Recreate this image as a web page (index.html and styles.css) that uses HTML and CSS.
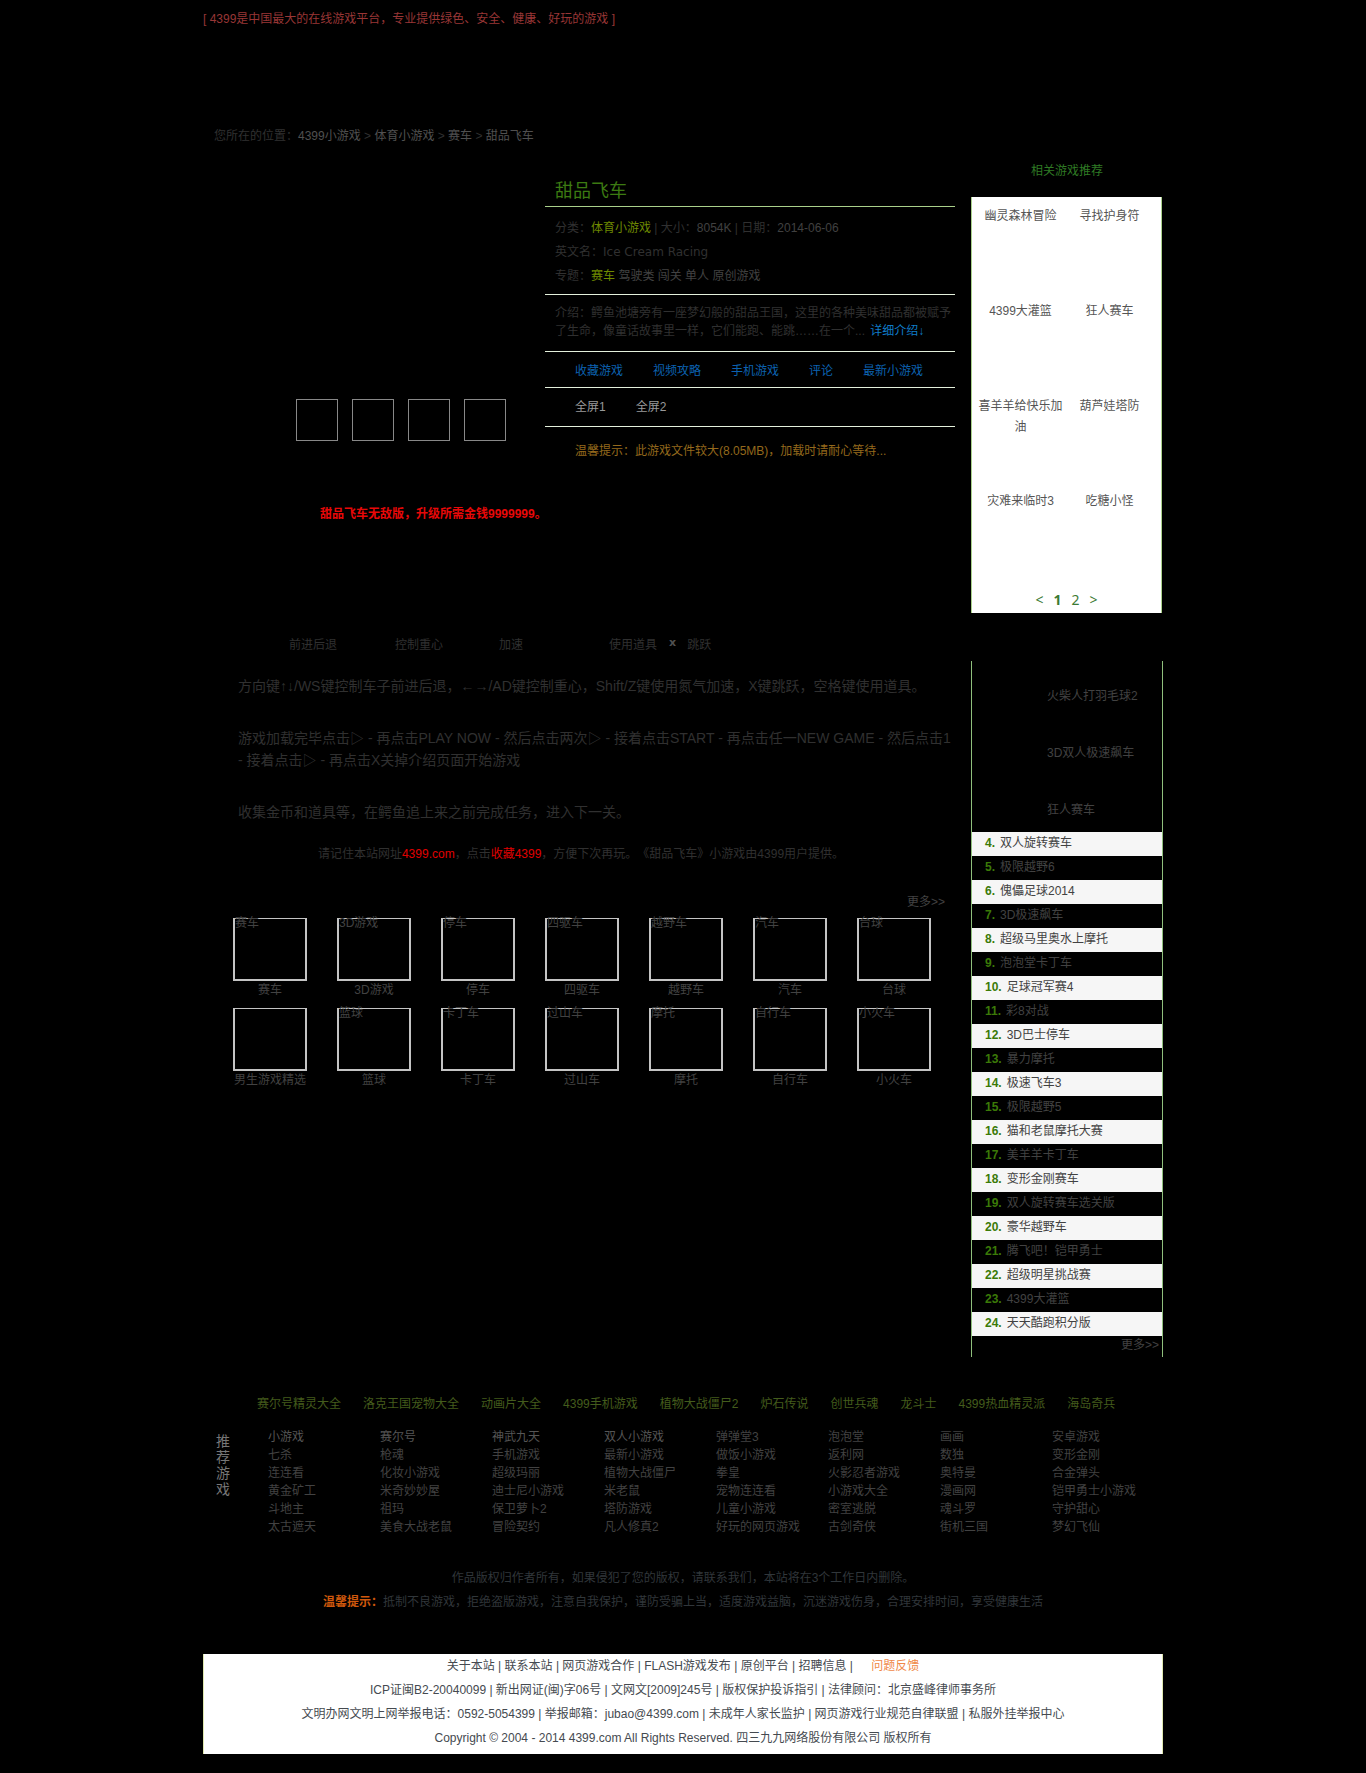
FILE: index.html
```html
<!DOCTYPE html>
<html lang="zh-CN">
<head>
<meta charset="utf-8">
<title>甜品飞车 - 4399小游戏</title>
<link rel="stylesheet" href="styles.css">
</head>
<body>
<div class="page">
  <header>
    <p class="slogan">[ 4399是中国最大的在线游戏平台，专业提供绿色、安全、健康、好玩的游戏 ]</p>
    <nav class="crumbs">您所在的位置：<a href="#">4399小游戏</a> &gt; <a href="#">体育小游戏</a> &gt; <a href="#">赛车</a> &gt; <a href="#">甜品飞车</a></nav>
  </header>

  <div class="columns">
    <main>
      <section class="game">
        <div class="preview">
          <div class="shots"><span></span><span></span><span></span><span></span></div>
          <p class="cheat">甜品飞车无敌版，升级所需金钱9999999。</p>
        </div>
        <div class="info">
          <h1>甜品飞车</h1>
          <div class="meta">
            <p>分类：<a class="hot" href="#">体育小游戏</a> | 大小：<span class="value">8054K</span> | 日期：<span class="value">2014-06-06</span></p>
            <p>英文名：<span class="english">Ice Cream Racing</span></p>
            <p>专题：<a class="hot" href="#">赛车</a> <a href="#">驾驶类</a> <a href="#">闯关</a> <a href="#">单人</a> <a href="#">原创游戏</a></p>
          </div>
          <p class="intro">介绍：鳄鱼池塘旁有一座梦幻般的甜品王国，这里的各种美味甜品都被赋予了生命，像童话故事里一样，它们能跑、能跳……在一个... <a href="#">详细介绍↓</a></p>
          <nav class="tools"><a href="#">收藏游戏</a><a href="#">视频攻略</a><a href="#">手机游戏</a><a href="#">评论</a><a href="#">最新小游戏</a></nav>
          <nav class="screens"><a href="#">全屏1</a><a href="#">全屏2</a></nav>
          <p class="tip">温馨提示：此游戏文件较大(8.05MB)，加载时请耐心等待...</p>
        </div>
      </section>

      <section class="controls">
        <span class="forward">前进后退</span><span class="balance">控制重心</span><span class="boost">加速</span><span class="item">使用道具</span><kbd>x</kbd><span>跳跃</span>
      </section>

      <section class="howto">
        <p>方向键↑↓/WS键控制车子前进后退，←→/AD键控制重心，Shift/Z键使用氮气加速，X键跳跃，空格键使用道具。</p>
        <p>游戏加载完毕点击▷ - 再点击PLAY NOW - 然后点击两次▷ - 接着点击START - 再点击任一NEW GAME - 然后点击1 - 接着点击▷ - 再点击X关掉介绍页面开始游戏</p>
        <p>收集金币和道具等，在鳄鱼追上来之前完成任务，进入下一关。</p>
      </section>
      <p class="remember">请记住本站网址<a href="#">4399.com</a>，点击<a href="#">收藏4399</a>，方便下次再玩。《甜品飞车》小游戏由4399用户提供。</p>

      <p class="more"><a href="#">更多&gt;&gt;</a></p>
      <ul class="topics">
        <li><a href="#"><span class="thumb">赛车</span>赛车</a></li>
        <li><a href="#"><span class="thumb">3D游戏</span>3D游戏</a></li>
        <li><a href="#"><span class="thumb">停车</span>停车</a></li>
        <li><a href="#"><span class="thumb">四驱车</span>四驱车</a></li>
        <li><a href="#"><span class="thumb">越野车</span>越野车</a></li>
        <li><a href="#"><span class="thumb">汽车</span>汽车</a></li>
        <li><a href="#"><span class="thumb">台球</span>台球</a></li>
        <li><a href="#"><span class="thumb"></span>男生游戏精选</a></li>
        <li><a href="#"><span class="thumb">篮球</span>篮球</a></li>
        <li><a href="#"><span class="thumb">卡丁车</span>卡丁车</a></li>
        <li><a href="#"><span class="thumb">过山车</span>过山车</a></li>
        <li><a href="#"><span class="thumb">摩托</span>摩托</a></li>
        <li><a href="#"><span class="thumb">自行车</span>自行车</a></li>
        <li><a href="#"><span class="thumb">小火车</span>小火车</a></li>
      </ul>
    </main>

    <aside>
      <h2>相关游戏推荐</h2>
      <section class="related">
        <ul>
          <li><a href="#">幽灵森林冒险</a></li><li><a href="#">寻找护身符</a></li>
          <li><a href="#">4399大灌篮</a></li><li><a href="#">狂人赛车</a></li>
          <li><a href="#">喜羊羊给快乐加油</a></li><li><a href="#">葫芦娃塔防</a></li>
          <li><a href="#">灾难来临时3</a></li><li><a href="#">吃糖小怪</a></li>
        </ul>
        <nav class="pager"><a href="#">&lt;</a><a class="current" href="#">1</a><a href="#">2</a><a href="#">&gt;</a></nav>
      </section>
      <section class="ranking">
        <ul class="leaders">
          <li><a href="#">火柴人打羽毛球2</a></li>
          <li><a href="#">3D双人极速飙车</a></li>
          <li><a href="#">狂人赛车</a></li>
        </ul>
        <ol start="4">
          <li><b>4.</b><a href="#">双人旋转赛车</a></li>
          <li><b>5.</b><a href="#">极限越野6</a></li>
          <li><b>6.</b><a href="#">傀儡足球2014</a></li>
          <li><b>7.</b><a href="#">3D极速飙车</a></li>
          <li><b>8.</b><a href="#">超级马里奥水上摩托</a></li>
          <li><b>9.</b><a href="#">泡泡堂卡丁车</a></li>
          <li><b>10.</b><a href="#">足球冠军赛4</a></li>
          <li><b>11.</b><a href="#">彩8对战</a></li>
          <li><b>12.</b><a href="#">3D巴士停车</a></li>
          <li><b>13.</b><a href="#">暴力摩托</a></li>
          <li><b>14.</b><a href="#">极速飞车3</a></li>
          <li><b>15.</b><a href="#">极限越野5</a></li>
          <li><b>16.</b><a href="#">猫和老鼠摩托大赛</a></li>
          <li><b>17.</b><a href="#">美羊羊卡丁车</a></li>
          <li><b>18.</b><a href="#">变形金刚赛车</a></li>
          <li><b>19.</b><a href="#">双人旋转赛车选关版</a></li>
          <li><b>20.</b><a href="#">豪华越野车</a></li>
          <li><b>21.</b><a href="#">腾飞吧！铠甲勇士</a></li>
          <li><b>22.</b><a href="#">超级明星挑战赛</a></li>
          <li><b>23.</b><a href="#">4399大灌篮</a></li>
          <li><b>24.</b><a href="#">天天酷跑积分版</a></li>
        </ol>
        <p class="all"><a href="#">更多&gt;&gt;</a></p>
      </section>
    </aside>
  </div>

  <nav class="featured"><a href="#">赛尔号精灵大全</a><a href="#">洛克王国宠物大全</a><a href="#">动画片大全</a><a href="#">4399手机游戏</a><a href="#">植物大战僵尸2</a><a href="#">炉石传说</a><a href="#">创世兵魂</a><a href="#">龙斗士</a><a href="#">4399热血精灵派</a><a href="#">海岛奇兵</a></nav>

  <section class="recommend">
    <h2>推荐游戏</h2>
    <div class="links">
      <a class="top" href="#">小游戏</a><a class="top" href="#">赛尔号</a><a class="top" href="#">神武九天</a><a class="top" href="#">双人小游戏</a><a href="#">弹弹堂3</a><a href="#">泡泡堂</a><a href="#">画画</a><a href="#">安卓游戏</a>
      <a href="#">七杀</a><a href="#">枪魂</a><a href="#">手机游戏</a><a href="#">最新小游戏</a><a href="#">做饭小游戏</a><a href="#">返利网</a><a href="#">数独</a><a href="#">变形金刚</a>
      <a href="#">连连看</a><a href="#">化妆小游戏</a><a href="#">超级玛丽</a><a href="#">植物大战僵尸</a><a href="#">拳皇</a><a href="#">火影忍者游戏</a><a href="#">奥特曼</a><a href="#">合金弹头</a>
      <a href="#">黄金矿工</a><a href="#">米奇妙妙屋</a><a href="#">迪士尼小游戏</a><a href="#">米老鼠</a><a href="#">宠物连连看</a><a href="#">小游戏大全</a><a href="#">漫画网</a><a href="#">铠甲勇士小游戏</a>
      <a href="#">斗地主</a><a href="#">祖玛</a><a href="#">保卫萝卜2</a><a href="#">塔防游戏</a><a href="#">儿童小游戏</a><a href="#">密室逃脱</a><a href="#">魂斗罗</a><a href="#">守护甜心</a>
      <a href="#">太古遮天</a><a href="#">美食大战老鼠</a><a href="#">冒险契约</a><a href="#">凡人修真2</a><a href="#">好玩的网页游戏</a><a href="#">古剑奇侠</a><a href="#">街机三国</a><a href="#">梦幻飞仙</a>
    </div>
  </section>

  <section class="notice">
    <p>作品版权归作者所有，如果侵犯了您的版权，请联系我们，本站将在3个工作日内删除。</p>
    <p><strong>温馨提示：</strong>抵制不良游戏，拒绝盗版游戏，注意自我保护，谨防受骗上当，适度游戏益脑，沉迷游戏伤身，合理安排时间，享受健康生活</p>
  </section>

  <footer>
    <p><a href="#">关于本站</a> | <a href="#">联系本站</a> | <a href="#">网页游戏合作</a> | <a href="#">FLASH游戏发布</a> | <a href="#">原创平台</a> | <a href="#">招聘信息</a> | <a class="feedback" href="#">问题反馈</a></p>
    <p>ICP证闽B2-20040099 | 新出网证(闽)字06号 | 文网文[2009]245号 | <a href="#">版权保护投诉指引</a> | 法律顾问：北京盛峰律师事务所</p>
    <p>文明办网文明上网举报电话：0592-5054399 | 举报邮箱：jubao@4399.com | <a href="#">未成年人家长监护</a> | <a href="#">网页游戏行业规范自律联盟</a> | <a href="#">私服外挂举报中心</a></p>
    <p>Copyright © 2004 - 2014 4399.com All Rights Reserved. 四三九九网络股份有限公司 版权所有</p>
  </footer>
</div>
</body>
</html>
```
FILE: styles.css
```css
* { box-sizing: border-box; }

body {
  margin: 0;
  background: #000;
  color: #303030;
  font: 12px/24px "Liberation Sans", "Noto Sans CJK SC", sans-serif;
  text-spacing-trim: space-all;
}

h1, h2, p, ul, ol { margin: 0; padding: 0; }
ul, ol { list-style: none; }
a { color: #424242; text-decoration: none; }

.page {
  max-width: 960px;
  margin: 0 auto 19px;
}

/* Header */
.slogan { color: #983636; line-height: 38px; }
.crumbs { margin-top: 86px; padding-left: 11px; }
.crumbs a { color: #505050; }

.columns {
  display: grid;
  grid-template-columns: minmax(0, 1fr) 192px;
  gap: 16px;
}

/* Game summary */
.game {
  display: grid;
  grid-template-columns: minmax(0, 1fr) 410px;
}
.preview { padding-top: 251px; }
.shots {
  display: flex;
  gap: 14px;
  padding-left: 93px;
}
.shots span {
  width: 42px;
  height: 42px;
  border: 1px solid #888;
}
.cheat {
  margin-top: 61px;
  padding-left: 117px;
  color: #e80808;
  font-weight: bold;
  white-space: nowrap;
}
.info > * { border-bottom: 1px solid #e4f0dc; }
.info h1 {
  margin-top: 29px;
  padding: 0 10px 1px;
  border-color: #a9d08a;
  color: #3c7a12;
  font-size: 18px;
  font-weight: normal;
  line-height: 28px;
}
.meta { padding: 9px 10px 6px; }
.meta .hot { color: #6f8a00; }
.value { color: #404040; }
.english { font-family: "DejaVu Sans", sans-serif; }
.intro {
  padding: 9px 0 11px 10px;
  line-height: 18px;
}
.intro a { margin-left: 2px; color: #0f7cc8; }
.tools, .screens {
  display: flex;
  gap: 30px;
  padding: 7px 0 4px 30px;
}
.tools a { color: #0c62b0; }
.screens { padding-bottom: 7px; }
.screens a { color: #999; }
.info .tip {
  padding: 12px 0 0 30px;
  border: 0;
  color: #94691c;
}

/* Controls and instructions */
.controls {
  display: flex;
  margin-top: 107px;
  padding-left: 86px;
}
.forward { margin-right: 58px; }
.balance { margin-right: 56px; }
.boost { margin-right: 86px; }
.item { margin-right: 12px; }
.controls kbd {
  margin-right: 11px;
  color: #505050;
  font: bold 11px/20px "DejaVu Sans", sans-serif;
}
.howto {
  display: grid;
  gap: 30px;
  margin-top: 18px;
  padding-left: 35px;
  font-size: 14px;
  line-height: 22px;
}
.remember {
  margin-top: 19px;
  padding-left: 4px;
  text-align: center;
}
.remember a { color: #e00000; }
.more {
  margin: 24px 10px 4px;
  text-align: right;
}
.topics {
  display: grid;
  grid-template-columns: repeat(7, 1fr);
  row-gap: 9px;
  padding: 0 9px 0 15px;
  line-height: 18px;
  text-align: center;
}
.thumb {
  display: block;
  width: 74px;
  height: 63px;
  margin: 0 auto;
  border: 2px solid #c4c4c4;
  border-top-width: 1px;
  line-height: 8px;
  text-align: left;
}

/* Sidebar */
aside h2 {
  margin: 11px 0 14px;
  color: #2f7a24;
  font-size: 12px;
  font-weight: normal;
  text-align: center;
}
.related {
  margin-right: 1px;
  padding: 9px 0 1px;
  border: solid #a9d08a;
  border-width: 0 1px;
  background: #fff;
}
.related ul {
  display: grid;
  grid-template-columns: 89px 89px;
  grid-auto-rows: 95px;
  padding-left: 4px;
  line-height: 21px;
  text-align: center;
}
.related a { color: #555; }
.related .pager {
  display: flex;
  justify-content: center;
  gap: 10px;
  margin-top: 2px;
  font: 14px/24px "Noto Sans", sans-serif;
}
.related .pager a { color: #3c7a34; }
.pager .current { font-weight: bold; }
.ranking {
  margin-top: 48px;
  border: solid #8fbf7c;
  border-width: 0 1px;
}
.leaders li {
  height: 57px;
  padding: 23px 0 0 75px;
}
.ranking ol li {
  display: flex;
  gap: 5px;
  padding: 0 0 2px 13px;
  line-height: 22px;
}
.ranking ol li:nth-child(odd) { background: #f6f6f6; }
.ranking ol b { color: #3b7a08; }
.all {
  padding: 0 3px 3px;
  line-height: 18px;
  text-align: right;
}

/* Site links */
.featured {
  display: flex;
  gap: 22px;
  margin-top: 35px;
  padding-left: 54px;
}
.featured a { color: #445c1c; }
.recommend {
  display: grid;
  grid-template-columns: 14px 1fr;
  gap: 38px;
  margin-top: 12px;
  padding-left: 13px;
}
.recommend h2 {
  padding-top: 5px;
  color: #777;
  font-size: 14px;
  font-weight: normal;
  line-height: 16px;
}
.links {
  display: grid;
  grid-template-columns: repeat(8, 112px);
  line-height: 18px;
}
.links .top { color: #555; }
.notice {
  margin: 30px 0 40px;
  color: #30363a;
  text-align: center;
}
.notice strong { color: #d0580c; }

footer {
  padding-bottom: 4px;
  border: solid #dfe8b0;
  border-width: 0 1px;
  background: #fff;
  text-align: center;
}
footer, footer a { color: #454a50; }
footer .feedback {
  margin-left: 15px;
  color: #f08848;
}
```
